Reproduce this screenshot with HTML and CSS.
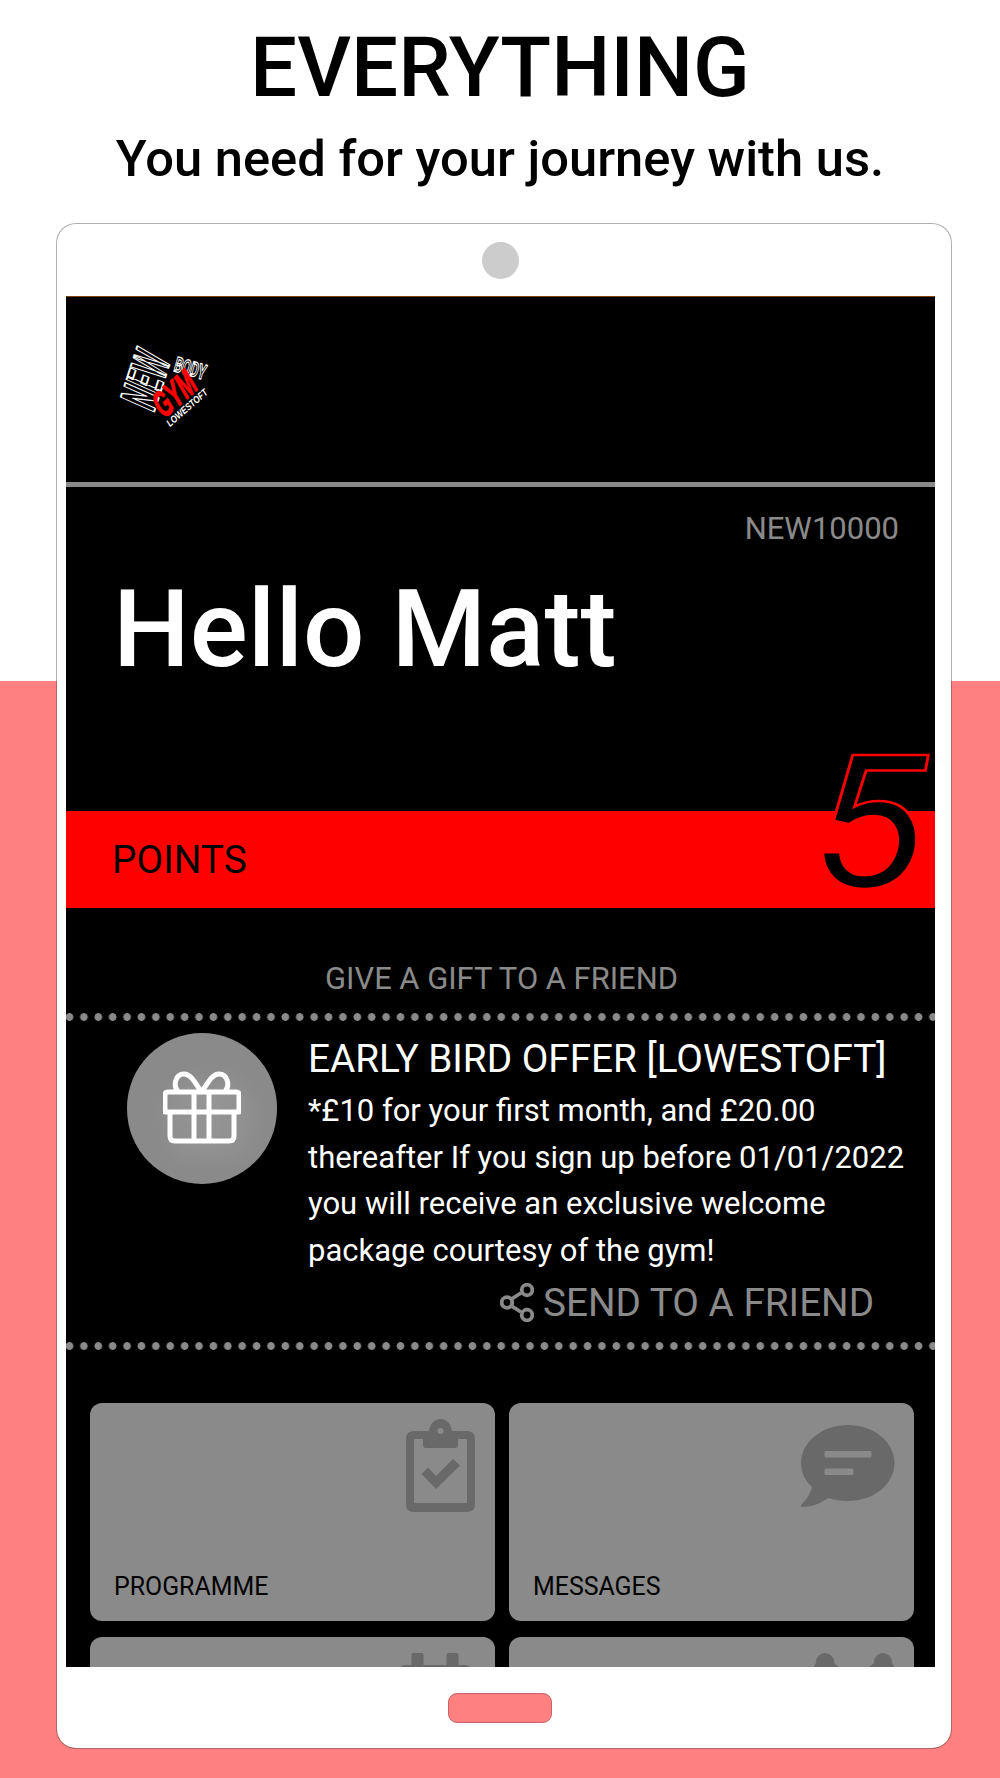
FILE: index.html
```html
<!DOCTYPE html>
<html lang="en">
<head>
<meta charset="utf-8">
<title>New Body Gym</title>
<link rel="stylesheet" href="styles.css">
</head>
<body>
<h1 class="headline">EVERYTHING</h1>
<p class="tagline">You need for your journey with us.</p>
<div class="phone">
  <div class="phone-top"><span class="camera"></span></div>
  <main class="screen">
    <header class="app-header">
      <svg class="logo" viewBox="0 0 130 110" width="130" height="110" role="img" aria-label="New Body Gym Lowestoft">
        <g transform="translate(53.500 83.500) rotate(-72) skewX(-6)"><text class="logo-new" textLength="56" lengthAdjust="spacingAndGlyphs">NEW</text></g>
        <g transform="translate(73 41) rotate(16)"><text class="logo-body" textLength="32" lengthAdjust="spacingAndGlyphs">BODY</text></g>
        <g transform="translate(64 89) rotate(-41) skewX(-4)"><text class="logo-gym" textLength="47" lengthAdjust="spacingAndGlyphs">GYM</text></g>
        <g transform="translate(70 97) rotate(-41)"><text class="logo-town" textLength="51" lengthAdjust="spacingAndGlyphs">LOWESTOFT</text></g>
      </svg>
    </header>
    <section class="greeting">
      <div class="member-code">NEW10000</div>
      <h2 class="hello">Hello Matt</h2>
    </section>
    <section class="points">
      <span class="points-label">POINTS</span>
      <span class="points-value">5</span>
    </section>
    <h3 class="gift-heading">GIVE A GIFT TO A FRIEND</h3>
    <div class="dots"></div>
    <article class="offer">
      <div class="gift-badge">
        <svg class="gift-icon" viewBox="0 0 78 74" width="78" height="74">
          <path d="M5 21H73Q76 21 76 24V41H2V24Q2 21 5 21ZM7 41V65Q7 70 12 70H66Q71 70 71 65V41M31 21V70M46 21V70M38.500 21C32 12 28 3 21 3C12 3 10 15 15 20.500M38.500 21C45 12 49 3 56 3C65 3 67 15 62 20.500"/>
        </svg>
      </div>
      <div class="offer-text">
        <h4 class="offer-title">EARLY BIRD OFFER [LOWESTOFT]</h4>
        <p class="offer-body">*£10 for your first month, and £20.00<br>thereafter If you sign up before 01/01/2022<br>you will receive an exclusive welcome<br>package courtesy of the gym!</p>
        <div class="send">
          <svg class="share-icon" viewBox="0 0 34 39" width="34" height="39">
            <path d="M11.500 16L21 10M11.500 23L21 29"/>
            <circle cx="7" cy="19.500" r="5.300"/><circle cx="27" cy="7" r="5.300"/><circle cx="27" cy="32" r="5.300"/>
          </svg>
          <span class="send-label">SEND TO A FRIEND</span>
        </div>
      </div>
    </article>
    <div class="dots"></div>
    <nav class="tiles">
      <div class="tile">
        <svg class="tile-icon clipboard" viewBox="0 0 69 93" width="69" height="93">
          <path fill-rule="evenodd" d="M8 12H23C24 5 28 0 34.500 0S45 5 46 12H61Q69 12 69 20V85Q69 93 61 93H8Q0 93 0 85V20Q0 12 8 12ZM17 20H9Q8 20 8 21V83Q8 84 9 84H60Q61 84 61 83V21Q61 20 60 20H52V26Q52 29 49 29H20Q17 29 17 26ZM34.500 9A3 3 0 1 0 34.500 15A3 3 0 1 0 34.500 9ZM15.500 55L22 48.500L30 57L47 40L54 46.500L30 70Z"/>
        </svg>
        <span class="tile-label">PROGRAMME</span>
      </div>
      <div class="tile">
        <svg class="tile-icon bubble" viewBox="0 0 94 83" width="94" height="83">
          <path fill-rule="evenodd" d="M47 0C73 0 93.500 17 93.500 38S73 76 47 76Q36 76 27 73C19 79 10 82 1 82Q-1 81 1 79Q9 71 11 62Q0 52 0 38C0 17 21 0 47 0ZM25 26Q23.500 26 23.500 27.500V31Q23.500 32.500 25 32.500H69Q70.500 32.500 70.500 31V27.500Q70.500 26 69 26ZM25 43.500Q23.500 43.500 23.500 45V48.500Q23.500 50 25 50H51Q52.500 50 52.500 48.500V45Q52.500 43.500 51 43.500Z"/>
        </svg>
        <span class="tile-label">MESSAGES</span>
      </div>
      <div class="tile">
        <svg class="tile-icon calendar" viewBox="0 0 74 50" width="74" height="50">
          <rect x="13.500" width="12" height="24" rx="2"/><rect x="48.500" width="12" height="24" rx="2"/><rect y="12" width="74" height="38" rx="7"/>
        </svg>
      </div>
      <div class="tile">
        <svg class="tile-icon people" viewBox="0 0 80 50" width="80" height="50">
          <path d="M2 9A9 9 0 0 1 20 9Q20 11 24 13V30H0V13Q2 11 2 9ZM60 9A9 9 0 0 1 78 9Q78 11 80 13V30H56V13Q60 11 60 9Z"/>
        </svg>
      </div>
    </nav>
  </main>
  <div class="phone-bottom"><span class="home-button"></span></div>
</div>
</body>
</html>
```

FILE: styles.css
```css
* { box-sizing: border-box; margin: 0; padding: 0; }
body {
  width: 1000px;
  height: 1778px;
  overflow: hidden;
  background: linear-gradient(#fff 681px, #ff8080 681px);
  font-family: Roboto, "Liberation Sans", sans-serif;
  color: #000;
}
svg { display: block; }
.headline { padding-top: 26px; font-size: 83.400px; line-height: 84px; font-weight: 500; text-align: center; }
.tagline { margin-top: 19px; font-size: 50.700px; line-height: 60px; font-weight: 500; text-align: center; }
.phone {
  width: 896px;
  height: 1526px;
  margin: 34px 0 0 56px;
  padding: 0 16px 0 9px;
  border: 1px solid rgba(60, 60, 60, .4);
  border-radius: 20px;
  background: #fff;
  background-clip: padding-box;
}
.phone-top { height: 72px; padding: 18px 0 0 415.500px; }
.camera { display: block; width: 37px; height: 37px; border-radius: 50%; background: #ccc; }
.screen { width: 869px; height: 1371px; overflow: hidden; background: #000; border-top: 1px solid #82410f; }
.app-header { height: 190px; padding: 33px 0 0 34px; border-bottom: 5px solid #8a8a8a; }
.logo { overflow: visible; }
.logo text { stroke-linejoin: round; }
.logo-new, .logo-body { font-family: Roboto, sans-serif; font-weight: 700; fill: #000; stroke: #fff; }
.logo-new { font-size: 51px; stroke-width: 1.800px; }
.logo-body { font-size: 21px; stroke-width: 1.300px; }
.logo-gym { font: italic 700 36px "Liberation Sans", sans-serif; fill: #f00; stroke: #f00; stroke-width: 1.200px; }
.logo-town { font: italic 700 10px "Liberation Sans", sans-serif; fill: #fff; }
.greeting { height: 324px; padding: 22px 36px 0 47px; }
.member-code { font-size: 31px; line-height: 40px; text-align: right; color: #8a8a8a; }
.hello { margin: 20px 0 0 0; font-size: 108.300px; line-height: 120px; font-weight: 500; color: #fff; }
.points { height: 97px; padding: 0 9px 0 46px; display: flex; align-items: center; justify-content: space-between; background: #f00; }
.points-label { font-size: 38.800px; line-height: 44px; }
.points-value { margin-top: -71px; font-size: 185px; line-height: 200px; font-style: italic; -webkit-text-stroke: 2.500px #f00; transform: scaleX(1.150); transform-origin: 94% 50%; }
.gift-heading { padding: 51px 0 14px 2px; font-size: 30.900px; line-height: 40px; font-weight: 400; text-align: center; color: #8a8a8a; }
.dots {
  height: 8px;
  background: radial-gradient(circle at 50% 50%, #8a8a8a 3.500px, transparent 4.200px) -3.700px 0 / 14.400px 8px repeat-x;
}
.offer { height: 321px; padding: 12px 0 0 60.500px; display: flex; gap: 31px; }
.gift-badge { width: 150.500px; height: 150.500px; padding: 38px 0 0 36px; border-radius: 50%; background: #8a8a8a; }
.gift-icon { fill: none; stroke: #fff; stroke-width: 5px; stroke-linejoin: round; stroke-linecap: round; filter: drop-shadow(8px 9px 10px rgba(255, 255, 255, .2)); }
.offer-text { color: #fff; white-space: nowrap; }
.offer-title { font-size: 38.700px; line-height: 44px; font-weight: 400; margin-top: 4px; }
.offer-body { margin-top: 7px; font-size: 31px; line-height: 46.600px; }
.send { margin: 7px 0 0 192px; display: flex; align-items: center; gap: 9px; color: #8a8a8a; }
.share-icon { margin-top: -2px; fill: none; stroke: #8a8a8a; stroke-width: 3.800px; }
.send-label { font-size: 38.700px; line-height: 44px; }
.tiles { padding: 53px 0 0 24px; display: grid; grid-template-columns: 404.500px 404.500px; grid-auto-rows: 217.500px; gap: 16px 14.500px; }
.tile { padding: 16px 19px 0 24px; border-radius: 12px; background: #8a8a8a; display: flex; flex-direction: column; justify-content: space-between; }
.tile-icon { align-self: flex-end; fill: #696969; }
.clipboard { margin-right: 1px; }
.bubble { margin-top: 6px; }
.people { margin-right: 1px; }
.calendar { margin-right: 4px; }
.tile-label { padding-bottom: 19px; font-size: 24.900px; line-height: 30px; }
.phone-bottom { height: 80px; padding: 26px 0 0 382px; }
.home-button { display: block; width: 104px; height: 30px; border: 1px solid #c86464; border-radius: 9px; background: #ff8080; }
```
